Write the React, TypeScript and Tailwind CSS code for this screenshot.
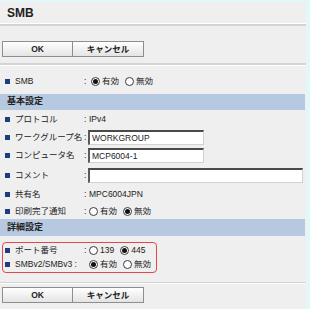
import React from 'react';

function Bullet() {
    return <span className="w-[5px] h-[5px] bg-[#1d3c82] shrink-0" />;
}

function Radio({ checked }: { checked?: boolean }) {
    return (
        <span className="w-[9px] h-[9px] rounded-full border border-[#3a3a3a] bg-white flex items-center justify-center shrink-0">
            {checked && <span className="w-[5px] h-[5px] rounded-full bg-[#111]" />}
        </span>
    );
}

function Choice({ checked, label }: { checked?: boolean; label: string }) {
    return (
        <span className="flex items-center gap-[2px] mr-[6px] shrink-0 whitespace-nowrap">
            <Radio checked={checked} />
            <span>{label}</span>
        </span>
    );
}

function Row({
    label,
    h,
    colon = true,
    pad = 'pl-[5px]',
    children,
}: {
    label: string;
    h: string;
    colon?: boolean;
    pad?: string;
    children?: React.ReactNode;
}) {
    return (
        <div className={`flex items-center ${h} ${pad}`}>
            <Bullet />
            <span className="ml-[5px] w-[69px] shrink-0 whitespace-nowrap">{label}</span>
            <span className="w-[4px] shrink-0">{colon ? ':' : ''}</span>
            <div className="flex items-center shrink-0 whitespace-nowrap">{children}</div>
        </div>
    );
}

function Band({ title, h }: { title: string; h: string }) {
    return (
        <div className={`${h} bg-[#b7c9e1] flex items-center pl-[7px] mr-[1px] font-bold text-[9px]`}>{title}</div>
    );
}

function TextBox({ value, w }: { value: string; w: string }) {
    return (
        <input
            readOnly
            defaultValue={value}
            className={`${w} h-[15px] bg-white border-t-2 border-l-2 border-r border-b border-t-[#4a4a4a] border-l-[#5a5a5a] border-r-[#d2d2d2] border-b-[#d2d2d2] pl-[2px] text-[8.5px] text-[#222] outline-none`}
        />
    );
}

function Buttons({ mt }: { mt: string }) {
    return (
        <div className={`flex ${mt} ml-[2px] h-[16px] font-bold text-[8.5px]`}>
            <button className="w-[71px] h-full border border-[#8e8e8e] bg-gradient-to-b from-white to-[#e4e4e4] text-[#222]">OK</button>
            <button className="w-[71px] h-full border border-l-0 border-[#8e8e8e] bg-gradient-to-b from-white to-[#e4e4e4] text-[#222]">キャンセル</button>
        </div>
    );
}

export default function App() {
    return (
        <div className="w-[310px] h-[309px] overflow-hidden bg-[#efefef] border-t-2 border-r-4 border-[#e2f7f7] flex flex-col text-[8.5px] text-[#222] font-['Liberation_Sans','Noto_Sans_CJK_JP',sans-serif]">
            {/* Title */}
            <div className="h-[21px] flex items-center pl-[7px] text-[12px] font-bold">SMB</div>
            <div className="h-[3px] border-t border-white bg-[#d3d3d3]" />

            <Buttons mt="mt-[15px]" />
            <div className="mt-[6px] h-[3px] bg-[#d3d3d3] border-b border-white" />

            <div className="mt-[6px]">
                <Row label="SMB" h="h-[18px]">
                    <span className="ml-[3px] flex">
                        <Choice checked label="有効" />
                        <Choice label="無効" />
                    </span>
                </Row>
            </div>

            {/* 基本設定 */}
            <div className="mt-[4px]">
                <Band title="基本設定" h="h-[16px]" />
            </div>
            <Row label="プロトコル" h="h-[18px]">
                <span className="ml-[1px]">IPv4</span>
            </Row>
            <Row label="ワークグループ名" h="h-[18px]">
                <TextBox value="WORKGROUP" w="w-[116px]" />
            </Row>
            <Row label="コンピュータ名" h="h-[19px]">
                <TextBox value="MCP6004-1" w="w-[116px]" />
            </Row>
            <Row label="コメント" h="h-[20px]">
                <TextBox value="" w="w-[215px]" />
            </Row>
            <Row label="共有名" h="h-[18px]">
                <span className="ml-[1px]">MPC6004JPN</span>
            </Row>
            <Row label="印刷完了通知" h="h-[16px]">
                <span className="ml-[1px] flex">
                    <Choice label="有効" />
                    <Choice checked label="無効" />
                </span>
            </Row>

            {/* 詳細設定 */}
            <Band title="詳細設定" h="h-[17px]" />
            <div className="mt-[6px] ml-[2px] w-[155px] border border-[#e0484c] rounded-[4px]">
                <Row label="ポート番号" h="h-[14px]" pad="pl-[2px]">
                    <span className="ml-[1px] flex">
                        <Choice label="139" />
                        <Choice checked label="445" />
                    </span>
                </Row>
                <Row label="SMBv2/SMBv3 :" h="h-[15px]" pad="pl-[2px]" colon={false}>
                    <span className="ml-[1px] flex">
                        <Choice checked label="有効" />
                        <Choice label="無効" />
                    </span>
                </Row>
            </div>
            <div className="mt-[9px] h-[2px] bg-[#d3d3d3] border-b border-white" />

            <Buttons mt="mt-[3px]" />
        </div>
    );
}
